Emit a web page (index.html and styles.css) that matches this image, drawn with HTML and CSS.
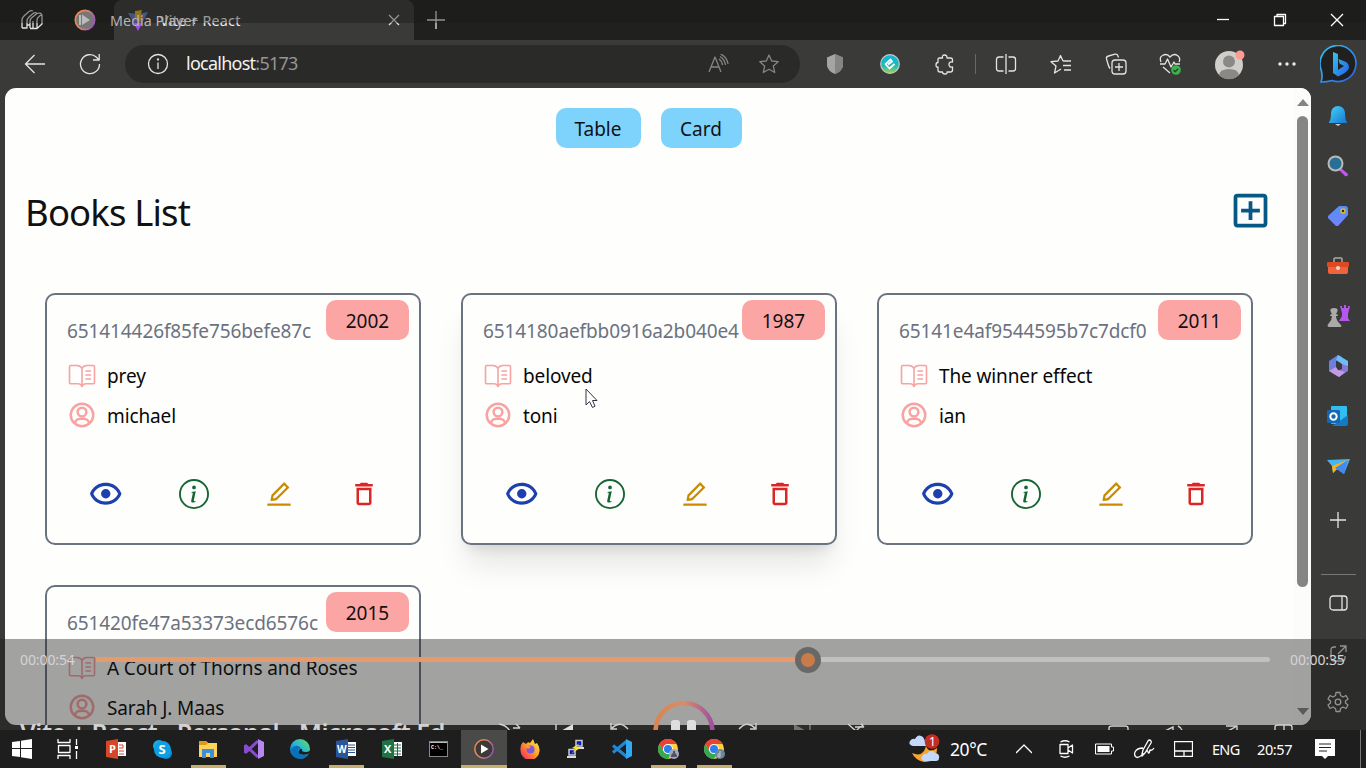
FILE: index.html
```html
<!DOCTYPE html>
<html lang="en">
<head>
<meta charset="utf-8">
<title>Vite + React</title>
<link rel="stylesheet" href="styles.css">
</head>
<body>
<svg class="defs" aria-hidden="true">
  <defs>
    <linearGradient id="ring" x1="0" x2="1" y1=".3" y2=".7"><stop offset="0" stop-color="#f08a4b"/><stop offset=".45" stop-color="#dc8468"/><stop offset="1" stop-color="#9950c0"/></linearGradient>
    <linearGradient id="arc" x1="0" x2="1" y1="0" y2="0"><stop offset="0" stop-color="#d98550"/><stop offset=".5" stop-color="#d98c6a"/><stop offset="1" stop-color="#a0509c"/></linearGradient>
    <linearGradient id="blue" x1="0" y1="0" x2="1" y2="1"><stop offset="0" stop-color="#45d3f7"/><stop offset="1" stop-color="#1676d2"/></linearGradient>
    <linearGradient id="bing" x1="0" y1="0" x2="1" y2="1"><stop offset="0" stop-color="#35c5ee"/><stop offset="1" stop-color="#2760e4"/></linearGradient>
    <linearGradient id="edge" x1="0" y1="1" x2="1" y2="0"><stop offset="0" stop-color="#0867bd"/><stop offset=".5" stop-color="#25b6d8"/><stop offset="1" stop-color="#69df55"/></linearGradient>
    <linearGradient id="fox" x1="1" y1="0" x2="0" y2="1"><stop offset="0" stop-color="#fff34a"/><stop offset=".5" stop-color="#ff9527"/><stop offset="1" stop-color="#f5156c"/></linearGradient>
    <linearGradient id="tag" x1="0" y1="0" x2="0" y2="1"><stop offset="0" stop-color="#5590f5"/><stop offset="1" stop-color="#7382ff"/></linearGradient>
    <linearGradient id="vite" x1="0" y1="0" x2="0" y2="1"><stop offset="0" stop-color="#4c8fc0"/><stop offset="1" stop-color="#b53bf8"/></linearGradient>
    <linearGradient id="epic" x1="0" y1="0" x2="0" y2="1"><stop offset="0" stop-color="#11b2e0"/><stop offset=".6" stop-color="#1cbdb5"/><stop offset="1" stop-color="#a6d246"/></linearGradient>
  </defs>
  <symbol id="book" viewBox="0 0 30 30"><g fill="none" stroke="currentColor" stroke-width="1.6" stroke-linejoin="round" stroke-linecap="round"><path d="M15 7.5Q13.5 4.5 10 4.5H3.5Q2.5 4.500 2.500 5.500V21.500Q2.500 22.700 3.500 22.700H11Q14 22.700 15 25.500Q16 22.700 19 22.700H26.500Q27.500 22.700 27.500 21.500V5.500Q27.500 4.500 26.500 4.500H20Q16.500 4.500 15 7.500V25"/><path d="M19 10H23.500M19 14H23.500M19 18H23.500"/></g></symbol>
  <symbol id="user" viewBox="0 0 24 24"><g fill="none" stroke="currentColor" stroke-width="2"><circle cx="12" cy="12" r="9"/><circle cx="12" cy="9.600" r="3.500"/><path d="M6.300 18.500C7 15.300 9 15 12 15S17 15.300 17.700 18.500"/></g></symbol>
  <symbol id="eye" viewBox="0 0 24 24"><path d="M12 9a3 3 0 1 0 0 6 3 3 0 0 0 0-6z"/><path d="M12 5c-7.633 0-9.927 6.617-9.948 6.684L1.946 12l.105.316C2.073 12.383 4.367 19 12 19s9.927-6.617 9.948-6.684l.106-.316-.105-.316C21.927 11.617 19.633 5 12 5zm0 12c-5.351 0-7.424-3.846-7.926-5C4.578 10.842 6.652 7 12 7c5.351 0 7.424 3.846 7.926 5-.504 1.158-2.578 5-7.926 5z"/></symbol>
  <symbol id="info" viewBox="0 0 16 16"><path d="M8 15A7 7 0 1 1 8 1a7 7 0 0 1 0 14m0 1A8 8 0 1 0 8 0a8 8 0 0 0 0 16"/><path d="m8.93 6.588-2.29.287-.082.38.45.083c.294.07.352.176.288.469l-.738 3.468c-.194.897.105 1.319.808 1.319.545 0 1.178-.252 1.465-.598l.088-.416c-.2.176-.492.246-.686.246-.275 0-.375-.193-.304-.533zM9 4.5a1 1 0 1 1-2 0 1 1 0 0 1 2 0"/></symbol>
  <symbol id="edit" viewBox="0 0 1024 1024"><path d="M257.7 752c2 0 4-.2 6-.5L431.9 722c2-.4 3.9-1.3 5.3-2.8l423.9-423.900a9.960 9.960 0 0 0 0-14.100L694.900 114.900c-1.900-1.900-4.400-2.900-7.100-2.900s-5.200 1-7.100 2.900L256.800 538.800c-1.500 1.500-2.400 3.300-2.800 5.300l-29.500 168.200a33.500 33.500 0 0 0 9.400 29.800c6.600 6.400 14.900 9.900 23.800 9.900zm67.400-174.400L687.800 215l73.300 73.300-362.700 362.600-88.900 15.700 15.600-89zM880 836H144c-17.700 0-32 14.300-32 32v36c0 4.400 3.600 8 8 8h784c4.400 0 8-3.600 8-8v-36c0-17.700-14.300-32-32-32z"/></symbol>
  <symbol id="trash" viewBox="0 0 24 24"><path d="M16 9v10H8V9h8m-1.500-6h-5l-1 1H5v2h14V4h-3.500l-1-1zM18 7H6v12c0 1.100.900 2 2 2h8c1.100 0 2-.900 2-2V7z"/></symbol>
  <symbol id="chrome" viewBox="0 0 20 20"><circle cx="10" cy="10" r="10" fill="#ffd23f"/><path d="M1.340 5A10 10 0 0 1 18.660 5H10A5 5 0 0 0 5.500 12.200Z" fill="#ea4335"/><path d="M1.340 5A10 10 0 0 0 10 20L14.300 12.500A5 5 0 0 1 5.670 12.500Z" fill="#34a853"/><circle cx="10" cy="10" r="4.900" fill="#fff"/><circle cx="10" cy="10" r="4" fill="#2d7ff0"/></symbol>
</svg>

<div class="screen">
  <header class="tabs">
    <div class="pinned"><svg width="24" height="24" viewBox="0 0 24 24" class="line workspaces"><path d="M2 20V12Q2 10 4 8L9 3.500Q11 2 13 3M2 20H7V13Q7 11 9 9L13 5.500Q15 4 17 5M7 17H10M10 20V13Q10 11 12 9.500L17 5.500Q22 4 22 8V16L17 20.500H10M17 20V12Q17 10 19 8.500L21.500 6.500M13 20V13"/></svg></div>
    <div class="tab"><svg class="vite" width="20" height="21" viewBox="0 0 20 21"><path d="M0 3 10 21 20 2 10 4Z" fill="url(#vite)"/><path d="M7 1 14 0 12.500 6H15L10 15 9 8H7Z" fill="#dfb01c"/></svg><span class="tab-title">Vite + React</span><svg class="line close" width="12" height="12" viewBox="0 0 12 12"><path d="M1 1 11 11M11 1 1 11"/></svg></div>
    <svg class="line newtab" width="18" height="18" viewBox="0 0 18 18"><path d="M9 0V18M0 9H18"/></svg>
    <div class="winbtns">
      <svg class="line" width="14" height="14" viewBox="0 0 14 14"><path d="M1 6.500H13"/></svg>
      <svg class="line" width="14" height="14" viewBox="0 0 14 14"><path d="M1.500 3.500h9v9h-9zM4 3.500V1.500h8.500V10.500H11"/></svg>
      <svg class="line" width="14" height="14" viewBox="0 0 14 14"><path d="M1 1 13 13M13 1 1 13"/></svg>
    </div>
  </header>

  <nav class="toolbar">
    <div class="nav-cell first"><svg class="line" width="22" height="20" viewBox="0 0 22 20"><path d="M10.500 1 1.500 10 10.500 19M1.500 10H21"/></svg></div>
    <div class="nav-cell"><svg class="line" width="22" height="22" viewBox="0 0 22 22"><path d="M20.500 11A9.500 9.500 0 1 1 17.500 4.200L20 7M20.200 1V7H14"/></svg></div>
    <div class="address">
      <svg class="line" width="22" height="22" viewBox="0 0 22 22"><circle cx="11" cy="11" r="9.500"/><path d="M11 9.500V16"/><circle cx="11" cy="6.500" r=".5"/></svg>
      <span class="url">localhost<i>:5173</i></span>
      <svg class="line dim read" width="22" height="20" viewBox="0 0 22 20"><path d="M1 18 7 3 13 18M3.200 13H10.800M11 5Q14 7 14.500 11M12 2.500Q16.500 5 17.500 11M12.500 0Q19 3 20 10"/></svg>
      <svg class="line dim star" width="22" height="22" viewBox="0 0 22 22"><path d="m11 2 2.700 6 6.500.700-4.900 4.400 1.400 6.400L11 16.200 5.300 19.500l1.400-6.400L1.800 8.700l6.500-.700Z"/></svg>
    </div>
    <div class="cell"><svg width="16" height="20" viewBox="0 0 16 20"><path d="M8 0 16 3.500V12Q15 17 8 20 1 17 0 12V3.500Z" fill="#a5a5a3"/><path d="M8 0 16 3.500V12Q15 17 8 20Z" fill="#858583"/></svg></div>
    <div class="cell"><svg width="20" height="20" viewBox="0 0 20 20"><circle cx="10" cy="10" r="9.300" fill="url(#epic)" stroke="#c8c8c8" stroke-width="1.200"/><path d="M8 10.500 12 7.500 10.500 5.500 5.500 10 9.500 14.500 14.500 10" fill="none" stroke="#fff" stroke-width="1.700"/></svg></div>
    <div class="cell"><svg class="line" width="20" height="21" viewBox="0 0 20 21"><path d="M4 4H7.500Q6.800 1 9.500 1T12 4H15.500Q17.500 4 17.500 6V8Q14 7.500 14 10.500T17.500 13V16Q17.500 18 15.500 18H12Q12.500 20 10 20T7.500 18H5Q3 18 3 16V13Q1 13.500 1 11T3 8.500V5Z"/></svg></div>
    <span class="tool-divider"></span>
    <div class="cell"><svg class="line" width="22" height="20" viewBox="0 0 22 20"><path d="M11 0V20M8.500 3H4Q1.500 3 1.500 5.500V14.500Q1.500 17 4 17H8.500M13.500 3H18Q20.500 3 20.500 5.500V14.500Q20.500 17 18 17H13.500"/></svg></div>
    <div class="cell"><svg class="line" width="22" height="20" viewBox="0 0 22 20"><path d="M13 7 10.500 1.500 8 7 1 7.700 6 12 4.500 19 11 15M13 7H21M13 11.500H21M14 16H21"/></svg></div>
    <div class="cell"><svg class="line" width="22" height="22" viewBox="0 0 22 22"><rect x="7" y="7" width="14" height="14" rx="3"/><path d="M14 10V18M10 14H18M5 15.500Q3.700 14 3 11L1.500 6Q1 3.500 3.500 3L10 1.200Q12.500 1 13 3L13.500 4.500"/></svg></div>
    <div class="cell"><svg class="line" width="23" height="22" viewBox="0 0 23 22"><path d="M2 9Q0 4 3.500 2.500 8 0 11 4 14.500 0 18.500 2.500 22 5 20 9M1 11H6L8.500 6 12 14 15 9 16 11H21M4 14 11 20"/><circle cx="17" cy="17" r="4.800" fill="#3fb24d" stroke="none"/><path d="m14.500 17 1.700 1.700 3-3" class="tick"/></svg></div>
    <div class="cell profile"><svg width="32" height="32" viewBox="0 0 32 32"><circle cx="15" cy="17" r="14" fill="#cfcecb"/><circle cx="15" cy="13.500" r="6" fill="#8b8987"/><path d="M5 27Q6 21 15 21T25 27A14 14 0 0 1 5 27" fill="#8b8987"/><circle cx="26" cy="7" r="4.500" fill="#ff9c92"/></svg></div>
    <div class="cell more"><svg width="18" height="4" viewBox="0 0 18 4" fill="#eee"><circle cx="2" cy="2" r="1.700"/><circle cx="9" cy="2" r="1.700"/><circle cx="16" cy="2" r="1.700"/></svg></div>
    <div class="cell bing"><svg width="38" height="38" viewBox="0 0 38 38"><path d="M1 37Q3 32 1.200 25A18 18 0 1 1 12 35.500Q7 37 1 37Z" fill="#202020" stroke="url(#bing)" stroke-width="1.700"/><path d="M13 7 18 9V25L24 21 19.500 18.500 18.500 14 26 17Q29 18.500 29 23 28 26 24 28.500L18 31.500 13 28Z" fill="url(#bing)"/></svg></div>
  </nav>

  <div class="workspace">
    <main class="page">
      <div class="views"><button>Table</button><button>Card</button></div>
      <div class="heading"><h1>Books List</h1><svg width="45" height="45" viewBox="0 0 24 24" fill="#075985"><path d="M19 3H5a2 2 0 0 0-2 2v14c0 1.100.890 2 2 2h14c1.100 0 2-.900 2-2V5c0-1.100-.900-2-2-2zm0 16H5V5h14v14zM11 7h2v4h4v2h-4v4h-2v-4H7v-2h4V7z"/></svg></div>
      <div class="cards">
        <article class="card"><b class="year">2002</b><div class="id">651414426f85fe756befe87c</div><div class="row"><svg><use href="#book"/></svg><span>prey</span></div><div class="row"><svg><use href="#user"/></svg><span>michael</span></div><div class="actions"><svg class="eye"><use href="#eye"/></svg><svg class="info"><use href="#info"/></svg><svg class="edit"><use href="#edit"/></svg><svg class="trash"><use href="#trash"/></svg></div></article>
        <article class="card hovered"><b class="year">1987</b><div class="id">6514180aefbb0916a2b040e4</div><div class="row"><svg><use href="#book"/></svg><span>beloved</span></div><div class="row"><svg><use href="#user"/></svg><span>toni</span></div><div class="actions"><svg class="eye"><use href="#eye"/></svg><svg class="info"><use href="#info"/></svg><svg class="edit"><use href="#edit"/></svg><svg class="trash"><use href="#trash"/></svg></div></article>
        <article class="card"><b class="year">2011</b><div class="id">65141e4af9544595b7c7dcf0</div><div class="row"><svg><use href="#book"/></svg><span>The winner effect</span></div><div class="row"><svg><use href="#user"/></svg><span>ian</span></div><div class="actions"><svg class="eye"><use href="#eye"/></svg><svg class="info"><use href="#info"/></svg><svg class="edit"><use href="#edit"/></svg><svg class="trash"><use href="#trash"/></svg></div></article>
        <article class="card"><b class="year">2015</b><div class="id">651420fe47a53373ecd6576c</div><div class="row"><svg><use href="#book"/></svg><span>A Court of Thorns and Roses</span></div><div class="row"><svg><use href="#user"/></svg><span>Sarah J. Maas</span></div></article>
      </div>
      <div class="scrollbar"><svg width="12" height="7" viewBox="0 0 12 7"><path d="M0 7 6 0 12 7Z"/></svg><span class="thumb"></span><svg width="12" height="7" viewBox="0 0 12 7"><path d="M0 0H12L6 7Z"/></svg></div>
    </main>
    <aside class="sidebar">
      <div><svg width="18" height="20" viewBox="0 0 18 20"><path d="M0 16Q2 14 2 7A7 7 0 0 1 16 7Q16 14 18 16V17H0Z" fill="url(#blue)"/><path d="M6 18H12L9 20Z" fill="#ccc"/></svg></div>
      <div><svg width="22" height="22" viewBox="0 0 22 22"><path d="m14 13 7 6Q21 22 18 21L12 15Z" fill="#c653f3"/><circle cx="8.500" cy="8.500" r="7" fill="#286f98" stroke="#b9b9b5" stroke-width="2"/></svg></div>
      <div><svg width="22" height="22" viewBox="0 0 22 22"><path d="M12 1H18Q21 1 21 4V10L11 21H9L1 13V11Z" fill="url(#tag)"/><circle cx="16" cy="6" r="2" fill="#332b18" stroke="#e3bc26" stroke-width="1.500"/></svg></div>
      <div><svg width="22" height="18" viewBox="0 0 22 18"><path d="M7 5V2Q7 1 8 1H14Q15 1 15 2V5" fill="none" stroke="#aaa" stroke-width="1.500"/><rect y="5" width="22" height="5" rx="1" fill="#dd4a22"/><path d="M1 10H21V15Q21 17 19 17H3Q1 17 1 15Z" fill="#f0633c"/><circle cx="11" cy="11" r="2" fill="#ddd"/></svg></div>
      <div><svg width="23" height="23" viewBox="0 0 23 23"><path d="M13 1H15V3H17V0H19V3H21V1H23L21 9V13L23 16H12L15 11V8Z" fill="#b556ef"/><path d="M3 11Q3 9 5 9Q1 3 7 3T9 9Q11 9 11 11H9Q9 15 13 19Q16 22 13 22H2Q-1 21 2 18Q5 15 5 11Z" fill="#aaa"/></svg></div>
      <div><svg width="21" height="22" viewBox="0 0 21 22"><path d="M10 0 14 2 8 6V14L4 17 1 16V6Z" fill="#6a7fe0"/><path d="M10 0 20 6V12L14 15V9L8 5Z" fill="#6cbdf2"/><path d="M14 9 20 11V16L11 22 4 18 14 14Z" fill="#8a76d6"/><path d="M1 16 8 12 10 15 17 17 11 22Z" fill="#c39be2"/></svg></div>
      <div><svg width="22" height="20" viewBox="0 0 22 20"><rect x="4" width="16" height="18" rx="1" fill="#32bdf0"/><path d="M14 14 21 9V18Q21 20 19 20H5Z" fill="#147ac8"/><rect y="4" width="13" height="13" rx="1" fill="#1268b5"/><circle cx="6.500" cy="10.500" r="3.200" fill="none" stroke="#fff" stroke-width="2"/></svg></div>
      <div><svg width="23" height="17" viewBox="0 0 23 17"><path d="M0 2 23 1 17 16 10 11 6 15 5 8Z" fill="#48b5f0"/><path d="M5 8 21 2 10 11 6 15Z" fill="#ffb40d"/><path d="M8 10 21 2 17 16Z" fill="#4389ef"/></svg></div>
      <div class="add"><svg class="line" width="16" height="16" viewBox="0 0 16 16"><path d="M8 0V16M0 8H16"/></svg></div>
      <hr>
      <div class="panel"><svg class="line" width="19" height="16" viewBox="0 0 19 16"><rect x="1" y="1" width="17" height="14" rx="3"/><path d="M13 1V15"/></svg></div>
      <div><svg class="line" width="17" height="17" viewBox="0 0 17 17"><path d="M6 2H4Q1 2 1 5V13Q1 16 4 16H12Q15 16 15 13V11M8 9 16 1M10 1H16V7"/></svg></div>
      <div class="gear"><svg class="line" width="22" height="22" viewBox="0 0 22 22"><path d="M9 1.500H13L13.500 4.500 16 6 19 4.500 21 8 18.500 10V12L21 14 19 17.500 16 16 13.500 17.500 13 20.500H9L8.500 17.500 6 16 3 17.500 1 14 3.500 12V10L1 8 3 4.500 6 6 8.500 4.500Z"/><circle cx="11" cy="11" r="2.800"/></svg></div>
    </aside>
  </div>

  <footer class="taskbar">
    <div class="start"><svg width="20" height="20" viewBox="0 0 20 20" fill="#fff"><path d="M0 3 8 2V9H0ZM9 1.800 20 0V9H9ZM0 10H8V18L0 17ZM9 10H20V20L9 18.200Z"/></svg></div>
    <div class="taskview"><svg class="line" width="21" height="20" viewBox="0 0 21 20"><path d="M1 0V3.500H13V0M1 20V16.500H13V20M1.500 6.500H13V13.500H1.500ZM19.500 0V6M19.500 12V20"/><rect x="18" y="7" width="3" height="3" fill="#fff" stroke="none"/></svg></div>
    <div><svg width="20" height="20" viewBox="0 0 20 20"><path d="M10 3H20V17H10" fill="#fff"/><path d="M0 2 12 0V20L0 18Z" fill="#d54728"/><text x="3" y="14" class="glyph">P</text><path d="M13 6H17V9H13M13 12H18M13 15H18" stroke="#d54728" fill="none"/></svg></div>
    <div><svg width="19" height="19" viewBox="0 0 19 19"><circle cx="6" cy="6" r="6" fill="#19afe4"/><circle cx="13" cy="13" r="6" fill="#0790dc"/><circle cx="9.500" cy="9.500" r="8.500" fill="#109fe2"/><text x="5.500" y="14" class="glyph s">S</text></svg></div>
    <div class="open"><svg width="20" height="18" viewBox="0 0 20 18"><path d="M1 1H8L10 3H19V17H1Z" fill="#ffd35b"/><path d="M1 1H8L10 3 8 5H1Z" fill="#db9a19"/><path d="M4 18V9H16V18H12V13H8V18Z" fill="#3b8fdb"/></svg></div>
    <div><svg width="20" height="20" viewBox="0 0 20 20"><path d="M1 6 14 18M1 14 14 2M1.500 6V14" fill="none" stroke="#884ccf" stroke-width="3"/><path d="M14 0 20 3V17L14 20Z" fill="#b786ee"/></svg></div>
    <div><svg width="20" height="20" viewBox="0 0 20 20"><circle cx="10" cy="10" r="10" fill="url(#edge)"/><path d="M8 12Q8 15 13 16Q17 16 19 14Q16 20 10 20Q1 18 1 10Q6 4 11 9Q8 10 8 12Z" fill="#0870bd"/><path d="M10 10Q13 9 12 12 15 14 20 12V14Q15 17 10 15 7 13 10 10Z" fill="#1e1e1e"/></svg></div>
    <div class="open"><svg width="20" height="20" viewBox="0 0 20 20"><path d="M10 3H20V17H10" fill="#fff"/><path d="M12 6H19M12 8.500H19M12 11H19M12 13.500H19" stroke="#2a5699"/><path d="M0 2 12 0V20L0 18Z" fill="#2a5699"/><text x="1" y="14" class="glyph w">W</text></svg></div>
    <div><svg width="20" height="20" viewBox="0 0 20 20"><path d="M10 3H20V17H10" fill="#fff"/><path d="M12 6H19M12 9H19M12 12H19M12 15H19M15.500 4V17" stroke="#207245"/><path d="M0 2 12 0V20L0 18Z" fill="#207245"/><text x="2" y="14" class="glyph">X</text></svg></div>
    <div><svg width="19" height="16" viewBox="0 0 19 16"><rect x=".5" y=".5" width="18" height="15" fill="#000" stroke="#888"/><path d="M1 1.500H18" stroke="#bbb"/><text x="2" y="8" class="cmd">C:\_</text></svg></div>
    <div class="open current"><svg width="20" height="20" viewBox="0 0 20 20"><circle cx="10" cy="10" r="9.200" fill="#3c3939" stroke="url(#ring)" stroke-width="1.500"/><path d="M7 5.500 14.500 10 7 14.500Z" fill="#fff"/></svg></div>
    <div><svg width="20" height="20" viewBox="0 0 20 20"><path d="M3 3 6 5Q8 2 10 4L13 0 15 5 17 4Q20 8 19.500 12A9.500 9.500 0 0 1 .5 11Q0 6 3 3Z" fill="url(#fox)"/><circle cx="10.500" cy="10.500" r="4" fill="#8357db"/><path d="M5 7Q8 6 11 8L8 10Z" fill="#ff9a24"/></svg></div>
    <div><svg width="20" height="20" viewBox="0 0 20 20"><path d="M10 1.500H16V7H10ZM3 10.500H9V16H3Z" fill="#0018c8" stroke="#ccc" stroke-width="1.500"/><path d="M9 9H18M1 18H10" stroke="#ddd" stroke-width="2"/><path d="M14 4 6 9 10 10 5 15 14 9 10 8Z" fill="#ffe51c"/></svg></div>
    <div><svg width="20" height="20" viewBox="0 0 20 20"><path d="M1 6.500 15 18M1 13.500 15 2" fill="none" stroke="#2188d4" stroke-width="3"/><path d="M14 0 20 3V17L14 20Z" fill="#32a9f2"/></svg></div>
    <div class="open"><svg class="browser" width="22" height="20" viewBox="0 0 22 20"><use href="#chrome" x="0" y="0" width="20" height="20"/><circle cx="16" cy="15" r="5" fill="#a4a8ba"/><path d="M13 18Q13 14 16 14T19 18ZM15 12H17V14H15Z" fill="#505260"/></svg></div>
    <div class="open"><svg class="browser" width="22" height="20" viewBox="0 0 22 20"><use href="#chrome" x="0" y="0" width="20" height="20"/><circle cx="16" cy="15" r="5" fill="#6d8796"/><path d="M16 12V18H14V15H16" fill="none" stroke="#bfd0d8"/></svg></div>
    <div class="tray">
      <svg class="weather" width="32" height="30" viewBox="0 0 32 30"><path d="M17 12Q20 20 28 14 28 28 15 28 6 26 3 19Q14 24 17 12Z" fill="#f8a42d"/><path d="M4 12Q-1 11 1 7 3 4 6 5 9-1 14 3 17 7 17 12ZM17 27Q11 27 13 22 16 19 18 20 22 14 26 19 31 20 30 24 30 27 27 27Z" fill="#c3d8fb"/><circle cx="23" cy="7.500" r="7.300" fill="#c52c24"/><text x="20" y="12" class="badge">1</text></svg>
      <span class="temp">20°C</span>
      <svg class="line chevron" width="16" height="10" viewBox="0 0 16 10"><path d="M0 9 8 1 16 9"/></svg>
      <svg class="line meet" width="16" height="18" viewBox="0 0 16 18"><path d="M2 4.500H10V13.500H2ZM10 8 14.500 5V13L10 10M2.500 2Q7-.500 11.500 2M2.500 16Q7 18.500 11.500 16"/></svg>
      <svg class="battery" width="19" height="12" viewBox="0 0 19 12"><path d="M.5 1H16.500V4H18.500V8H16.500V11H.5Z" fill="none" stroke="#fff"/><path d="M2.500 3H14.500V9H2.500Z" fill="#fff"/></svg>
      <svg class="line pen" width="21" height="20" viewBox="0 0 21 20"><path d="M8 15 9 11 14 2Q15.500 0 17 2 17.500 3 17 4L11 14 8 17ZM9 9Q3 9 1 13-.500 17 3 18.500 7 18 9 14M12 13Q13 10 14 13T16 11Q18 12 20 9"/></svg>
      <svg class="line touchpad" width="19" height="16" viewBox="0 0 19 16"><path d="M.5.5H18.500V15.500H.5ZM.5 10H18.500M10 10V15"/></svg>
      <span class="lang">ENG</span><span class="clock">20:57</span>
      <svg class="notice" width="20" height="20" viewBox="0 0 20 20"><path d="M0 0H20V17H13L10 20 7 17H0Z" fill="#fff"/><path d="M4 5H16M4 8.500H16M4 12H12" stroke="#222"/></svg>
      <span class="show-desktop"></span>
    </div>
  </footer>

  <div class="player-title"><svg width="22" height="22" viewBox="0 0 22 22"><circle cx="11" cy="11" r="9.700" fill="#777" stroke="url(#ring)" stroke-width="1.700"/><path d="M5 6H7V16H5ZM8 5.500 16 11 8 16Z" fill="#bbb"/></svg><span>Media Player</span></div>
  <div class="player">
    <div class="seek"><span class="elapsed">00:00:54</span><div class="track"><div class="played"></div><div class="knob"></div></div><span class="remaining">00:00:35</span></div>
    <div class="media-title">Vite + React - Personal - Microsoft Ed</div>
    <svg class="controls" width="860" height="30" viewBox="0 0 860 30"><circle cx="244" cy="31.500" r="28.500" fill="none" stroke="url(#arc)" stroke-width="4.500"/><g fill="#dedede"><rect x="231" y="20" width="9" height="20" rx="3"/><rect x="247" y="20" width="9" height="20" rx="3"/><path d="M133 24V32H119Z"/><path d="M354 24V32H368Z" opacity=".4"/></g><g fill="none" stroke="#d2d2d2" stroke-width="1.400"><path d="M59 24Q66 25 70 31M73 28H80M76 24 80 28M116 24V32M171 23V29H177M172 28Q180 20 188 29M316 23V29H310M315 28Q307 20 299 29M408 24 416 31M423 24 416 31M415 27H424M421 24 424 27M669 32V28Q669 26 672 26H685Q688 26 688 28V32M725 31 733 27V32M738 26Q742 28 742 31M786 26H797V32M797 26 788 31M835 32V27Q835 25 838 25H849Q852 25 852 27V32M844 25V32"/><path d="M370 24V31" opacity=".5"/></g></svg>
  </div>
  <svg class="pointer" width="13" height="21" viewBox="0 0 13 21"><path d="M1 1V17L4.500 13.500 7.500 19.500 10 18.200 7.500 12.500H12Z" fill="#fff" stroke="#333544"/></svg>
</div>
</body>
</html>
```
FILE: styles.css
```css
* { box-sizing: border-box; }
body { margin: 0; overflow: hidden; font-family: "Noto Sans", sans-serif; }
svg { display: block; flex: none; }
.defs { position: absolute; width: 0; height: 0; }
.screen { position: relative; width: 1366px; height: 768px; display: flex; flex-direction: column; overflow: hidden; background: #3a3a38; }
.line { fill: none; stroke: #e4e4e2; stroke-width: 1.3; stroke-linejoin: round; }
.dim { stroke: #858583; }
.tick { stroke: #224422; }

.tabs { position: relative; height: 40px; display: flex; align-items: center; background: #20201e; flex: none; }
.pinned { width: 114px; padding-left: 20px; }
.tab { width: 300px; height: 40px; display: flex; align-items: center; padding: 0 14px; border-radius: 8px 8px 0 0; background: #3a3a38; }
.tab-title { margin-left: 12px; font-size: 14.3px; letter-spacing: .2px; color: #f0f0ee; white-space: nowrap; }
.close { margin-left: auto; }
.newtab { margin-left: 13px; }
.winbtns { position: relative; z-index: 1; margin-left: auto; display: flex; gap: 43px; padding-right: 22px; }
.winbtns .line { stroke: #fff; }

.toolbar { height: 48px; display: flex; align-items: center; flex: none; }
.nav-cell { width: 55px; display: flex; justify-content: center; }
.nav-cell.first { width: 70px; margin-right: -8px; }
.address { width: 675px; height: 38px; margin: 0 7px 0 8px; display: flex; align-items: center; padding: 0 20px 0 22px; border-radius: 19px; background: #2a2a28; }
.url { margin: -2px 0 0 17px; color: #f2f2f0; font-size: 18px; letter-spacing: -.75px; }
.url i { font-style: normal; color: #969694; }
.read { margin-left: auto; }
.star { margin-left: 28px; }
.cell { width: 55px; display: flex; justify-content: center; flex: none; }
.tool-divider { width: 1px; height: 20px; margin: 0 2px 0 3px; background: #686866; }
.profile { width: 63px; }
.more { width: 51px; }
.bing { width: 54px; }

.workspace { flex: 1; display: flex; min-height: 0; }
.page { position: relative; width: 1306px; height: 637px; margin-left: 5px; padding: 20px 38px 0 20px; overflow: hidden; border-radius: 11px; background: #fefefc; }
.views { display: flex; justify-content: center; gap: 20px; margin-right: 1px; }
.views button { width: 85px; height: 40px; padding: 2px 0 0; border: 0; border-radius: 10px; background: #7dd3fc; color: #111; font: 19px "Noto Sans", sans-serif; }
.views button + button { width: 81px; }
.heading { display: flex; justify-content: space-between; align-items: center; height: 45px; margin-top: 40px; }
h1 { margin: 3px 0 0; font-size: 36.5px; font-weight: 400; letter-spacing: -.85px; color: #111; }
.cards { display: grid; grid-template-columns: repeat(3, 376px); gap: 40px; padding: 60px 20px 0; }
.card { position: relative; height: 252px; padding: 20px; border: 2px solid #6b7280; border-radius: 10px; background: #fefefc; }
.hovered { box-shadow: 0 25px 31px -6px rgba(0,0,0,.1), 0 10px 12px -7px rgba(0,0,0,.1); }
.year { position: absolute; top: 5px; right: 10px; width: 83px; height: 40px; border-radius: 10px; background: #fca5a5; color: #111; font-size: 19px; line-height: 42px; font-weight: 400; text-align: center; }
.id { height: 46px; line-height: 32px; font-size: 19px; letter-spacing: -.1px; color: #6b7280; white-space: nowrap; }
.row { height: 30px; display: flex; align-items: center; gap: 10px; font-size: 19px; letter-spacing: -.12px; color: #080808; white-space: nowrap; }
.row + .row { margin-top: 9px; }
.row + .row span { padding-top: 1px; }
.row svg { width: 30px; height: 30px; color: #f8a2a2; }
.actions { display: flex; justify-content: space-between; align-items: center; padding: 0 20px; height: 38px; margin-top: 45px; }
.actions svg { width: 30px; height: 30px; }
.actions .eye { width: 37.5px; height: 37.5px; fill: #1e40af; }
.actions .info { fill: #166534; }
.actions .edit { fill: #ca8a04; }
.actions .trash { fill: #dc2626; }
.scrollbar { position: absolute; top: 0; right: 0; width: 18px; height: 637px; padding: 11px 3px 10px 4px; display: flex; flex-direction: column; fill: #858583; background: #fcfcfa; }
.thumb { width: 11px; height: 471px; margin: 10px 0 auto; border-radius: 6px; background: #858583; }

.sidebar { width: 55px; padding: 3px 1px 0 0; display: flex; flex-direction: column; align-items: center; }
.sidebar div { height: 50px; display: flex; align-items: center; justify-content: center; flex: none; }
.sidebar .add { margin-top: 4px; }
.sidebar hr { width: 35px; height: 1px; margin: 29px 0 3px; border: 0; background: #777; flex: none; }
.sidebar .gear { margin-top: -1px; }

.taskbar { position: relative; z-index: 3; height: 38px; display: flex; flex: none; background: #1e1e1e; color: #fff; }
.taskbar .line { stroke: #fff; }
.taskbar > div { width: 46px; height: 38px; display: flex; align-items: center; justify-content: center; flex: none; }
.taskbar .start { width: 44px; }
.taskbar .taskview { width: 49px; padding-right: 3px; }
.taskbar .open { background: linear-gradient(#c7ae6a, #c7ae6a) center bottom / 35px 3px no-repeat; }
.taskbar .current { background: linear-gradient(#c7ae6a, #c7ae6a) center bottom / 46px 3px no-repeat #4a4a49; }
.browser { margin-left: 2px; }
.glyph { fill: #fff; font: bold 11px "Open Sans", sans-serif; }
.glyph.s { font-size: 13px; }
.glyph.w { font-size: 10px; }
.cmd { fill: #fff; font: bold 5px "Liberation Mono", monospace; }
.badge { fill: #fff; font: 12px "Noto Sans", sans-serif; }
.taskbar .tray { width: 629px; justify-content: flex-start; padding-left: 172px; }
.temp { width: 40px; margin-left: 9px; font-size: 17.5px; letter-spacing: -.4px; }
.chevron { margin-left: 26px; }
.meet { margin-left: 26px; }
.battery { margin-left: 21px; }
.pen { margin-left: 20px; }
.touchpad { margin-left: 19px; }
.lang { width: 30px; margin-left: 19px; font-size: 14.5px; letter-spacing: -.7px; }
.clock { width: 37px; margin-left: 15px; font-size: 14.5px; letter-spacing: -.4px; }
.notice { margin-left: 21px; }
.show-desktop { width: 1px; height: 38px; margin-left: 25px; background: #777; }

.player-title { position: absolute; top: 0; left: 0; width: 1366px; height: 23px; background: rgba(25,25,25,.4); display: flex; padding: 9px 0 0 74px; gap: 14px; color: #b5b5b3; font-size: 14.3px; line-height: 24px; letter-spacing: .05px; }
.player { position: absolute; z-index: 2; top: 639px; left: 0; width: 1366px; height: 91px; overflow: hidden; background: rgba(25,25,25,.4); color: #d4d4d4; }
.seek { height: 41px; display: flex; align-items: center; padding: 0 20px; font-size: 14px; letter-spacing: -.1px; }
.elapsed, .remaining { width: 56px; }
.track { position: relative; width: 1174px; height: 5px; margin: 0 20px; border-radius: 3px; background: #c1c1c1; }
.played { width: 712px; height: 5px; border-radius: 3px; background: #e79b6c; }
.knob { position: absolute; left: 699px; top: -10px; width: 26px; height: 26px; border: 6px solid #686868; border-radius: 50%; background: #ca7c48; }
.media-title { position: absolute; left: 20px; top: 77px; font-size: 25px; line-height: 32px; font-weight: 600; letter-spacing: -.48px; white-space: nowrap; color: #d2d2d2; }
.controls { position: absolute; left: 440px; top: 61px; }
.pointer { position: absolute; left: 585px; top: 388px; z-index: 1; }
```
